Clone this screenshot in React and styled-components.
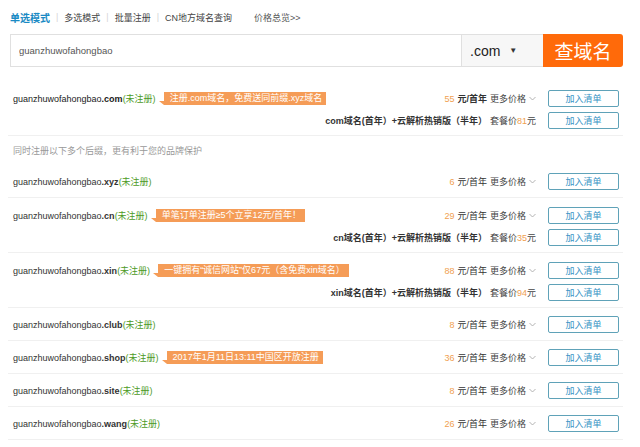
import React from 'react';
import styled, { createGlobalStyle } from 'styled-components';

const GlobalStyle = createGlobalStyle`
  body {
    margin: 0;
    background: #fff;
    font-family: "Liberation Sans", "Noto Sans CJK SC", sans-serif;
    color: #333;
  }
`

const NAME = 'guanzhuwofahongbao'

const rows = [
  { tld: 'com', strong: true, tag: '注册.com域名，免费送同前缀.xyz域名', price: 55, pkg: 81 },
  { hint: '同时注册以下多个后缀，更有利于您的品牌保护' },
  { tld: 'xyz', price: 6 },
  { tld: 'cn', tag: '单笔订单注册≥5个立享12元/首年！', price: 29, pkg: 35 },
  { tld: 'xin', tag: '一键拥有“诚信网站”仅67元（含免费xin域名）', price: 88, pkg: 94 },
  { tld: 'club', price: 8 },
  { tld: 'shop', tag: '2017年1月11日13:11中国区开放注册', price: 36 },
  { tld: 'site', price: 8 },
  { tld: 'wang', price: 26 },
]

const tabs = ['单选模式', '多选模式', '批量注册', 'CN地方域名查询']

const Chevron = () => (
  <svg width="7" height="5" viewBox="0 0 7 5" fill="none" stroke="#aaa" strokeWidth="0.9">
    <path d="M0.5 1 L3.5 4 L6.5 1" />
  </svg>
)

const App = () => {
  return (
    <Page>
      <GlobalStyle />
      <Tabs>
        {tabs.map((t, i) => (
          <React.Fragment key={t}>
            {i > 0 && <Divider>|</Divider>}
            <Tab active={i === 0}>{t}</Tab>
          </React.Fragment>
        ))}
        <Overview>价格总览&gt;&gt;</Overview>
      </Tabs>

      <Search>
        <Input defaultValue={NAME} />
        <Suffix>
          .com <Caret>▼</Caret>
        </Suffix>
        <SearchButton>查域名</SearchButton>
      </Search>

      <List>
        {rows.map((r, i) => {
          if (r.hint) return <Hint key={i}>{r.hint}</Hint>
          return (
            <Row key={i} double={!!r.pkg}>
              <Line>
                <Name strong={r.strong}>
                  {NAME}<b>.{r.tld}</b><Free>(未注册)</Free>
                </Name>
                {r.tag && <Tag>{r.tag}</Tag>}
                <Price strong={r.strong}>
                  <Num>{r.price}</Num>
                  <Unit>元/首年</Unit>
                  <More>更多价格</More>
                  <Chevron />
                </Price>
                <AddButton>加入清单</AddButton>
              </Line>
              {r.pkg && (
                <Line>
                  <Price>
                    <b>{r.tld}域名(首年）+云解析热销版（半年）</b>
                    <More>套餐价<Num>{r.pkg}</Num>元</More>
                  </Price>
                  <AddButton>加入清单</AddButton>
                </Line>
              )}
            </Row>
          )
        })}
      </List>
    </Page>
  )
}

const Page = styled.div`
  width: 640px;
  padding: 0 0 0 8px;
  box-sizing: border-box;
`

const Tabs = styled.div`
  display: flex;
  align-items: center;
  height: 34px;
  padding-left: 2px;
  font-size: 9px;
`

const Tab = styled.span`
  color: ${p => (p.active ? '#1a8ac4' : '#444')};
  font-weight: ${p => (p.active ? 'bold' : 'normal')};
  font-size: ${p => (p.active ? '10px' : '9px')};
`

const Divider = styled.span`
  color: #d5d5d5;
  margin: 0 6px;
`

const Overview = styled.span`
  color: #555;
  margin-left: 22px;
`

const Search = styled.div`
  display: flex;
  height: 33px;
  margin-left: 2px;
  width: 613px;
`

const Input = styled.input`
  flex: 1;
  min-width: 0;
  border: 1px solid #e0e0e0;
  border-right: none;
  padding: 0 0 0 8px;
  font-family: "Liberation Sans", sans-serif;
  font-size: 9.5px;
  color: #555;
  outline: none;
`

const Suffix = styled.div`
  width: 82px;
  box-sizing: border-box;
  display: flex;
  align-items: center;
  padding-left: 8px;
  background: #f7f7f7;
  border: 1px solid #e0e0e0;
  border-right: none;
  font-size: 14px;
  color: #222;
`

const Caret = styled.span`
  font-size: 8px;
  margin-left: 9px;
  color: #333;
`

const SearchButton = styled.button`
  width: 80px;
  border: none;
  border-radius: 0 3px 3px 0;
  background: #ff6a0a;
  color: #fff;
  font-size: 19px;
  font-family: "Noto Sans CJK SC", sans-serif;
  padding: 0;
`

const List = styled.div`
  width: 615px;
  margin-top: 14px;
`

const Row = styled.div`
  display: flex;
  flex-direction: column;
  gap: 5px;
  padding: ${p => (p.double ? '9px 0 6px' : '8px 0 7px')};
  border-bottom: 1px solid #f0f0f0;
`

const Hint = styled.div`
  height: 29px;
  display: flex;
  align-items: center;
  padding-left: 5px;
  font-size: 9px;
  color: #999;
`

const Line = styled.div`
  display: flex;
  align-items: center;
  height: 17px;
  padding-left: 5px;
`

const Name = styled.span`
  font-size: 9px;
  color: ${p => (p.strong ? '#1a1a1a' : '#333')};
  white-space: nowrap;
  b {
    font-weight: bold;
  }
`

const Free = styled.span`
  color: #4c9a1e;
  font-weight: normal;
`

const Tag = styled.span`
  position: relative;
  margin-left: 8px;
  height: 13px;
  line-height: 13px;
  padding: 0 4px 0 6px;
  background: #f59c57;
  color: #fff;
  font-size: 9px;
  white-space: nowrap;
  &::before {
    content: '';
    position: absolute;
    left: -5px;
    bottom: 0;
    border-style: solid;
    border-width: 0 5px 4px 0;
    border-color: transparent #f59c57 transparent transparent;
  }
`

const Price = styled.div`
  margin-left: auto;
  display: flex;
  align-items: center;
  gap: 3px;
  font-size: 9px;
  color: #333;
  white-space: nowrap;
  b {
    font-weight: bold;
  }
  ${p => p.strong && 'span:nth-child(2) { font-weight: bold; }'}
`

const Num = styled.span`
  color: #f0a050;
`

const Unit = styled.span``

const More = styled.span`
  color: #444;
`

const AddButton = styled.button`
  width: 71px;
  height: 17px;
  margin: 0 4px 0 12px;
  padding: 0;
  background: #fff;
  border: 1px solid #5fa2b8;
  border-radius: 2px;
  color: #3592c4;
  font-size: 9px;
  font-family: "Noto Sans CJK SC", sans-serif;
`

export default App
